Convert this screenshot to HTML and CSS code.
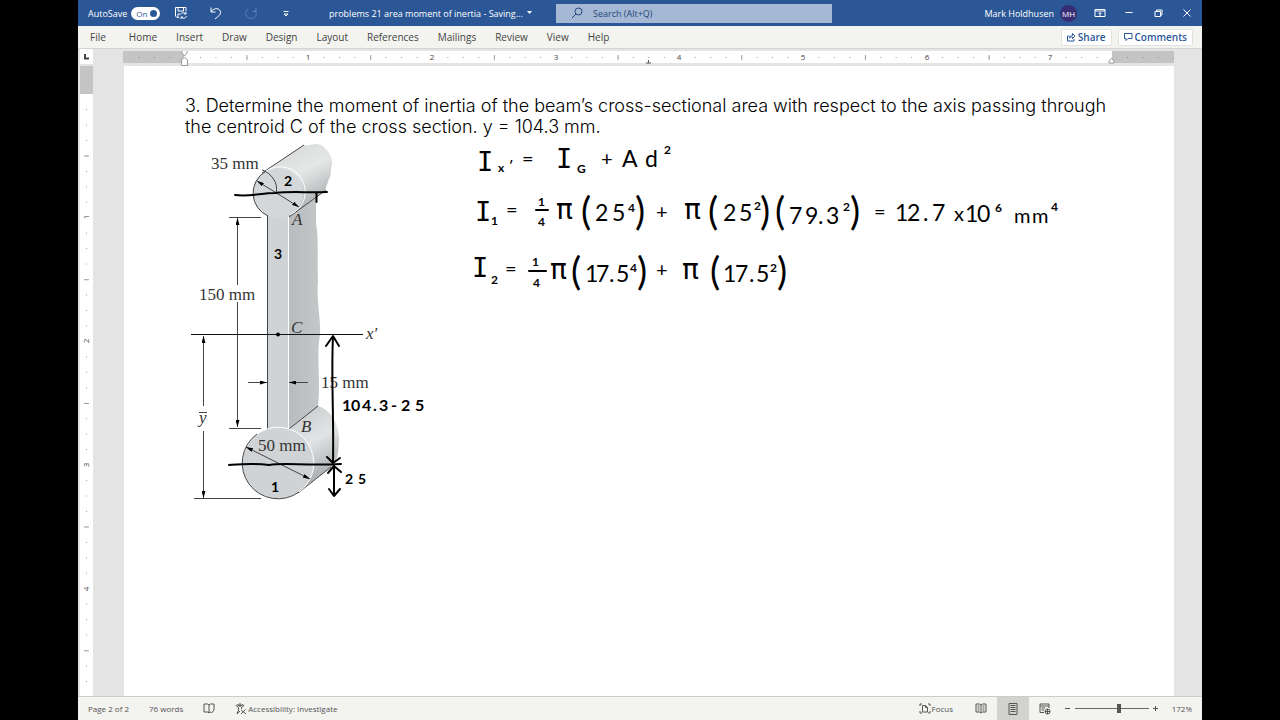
FILE: index.html
```html
<!DOCTYPE html>
<html lang="en">
<head>
<meta charset="utf-8">
<title>problems 21 area moment of inertia</title>
<link rel="stylesheet" href="styles.css">
</head>
<body>
<div class="app">
  <header class="titlebar">
    <div class="quick">
      <label class="autosave">AutoSave <span class="switch"><input type="checkbox" checked><span>On</span></span></label>
      <button class="tool" aria-label="Save"><svg width="14" height="14" viewBox="0 0 14 14"><path d="M5 11.500H3L1.500 10V1.500H12V5M4 1.500V5H9.500V1.500M4 11V8H6"/><path d="M6.500 8.500C7 6.500 10.500 6 12 8M12 5.800V8H9.800M12.500 10C12 12.500 8.500 13 7 11M7 13V11H9"/></svg></button>
      <button class="tool" aria-label="Undo"><svg width="14" height="14" viewBox="0 0 14 14"><path d="M2 1.500V6H6.500M2 6C5 1 11.500 2 11.500 6.500C11.500 9 9.500 10 6 13"/></svg></button>
      <button class="tool faded" aria-label="Redo"><svg width="14" height="14" viewBox="0 0 14 14"><path d="M12 1.500V5.500H8.500M4 3C-.5 6.500 2 12.500 7 12.500C12 12.500 14 7 10.500 3.500"/></svg></button>
      <button class="tool" aria-label="Customize toolbar"><svg width="14" height="14" viewBox="0 0 14 14"><path d="M4.500 5.500H9.500M5 8H9L7 10Z"/></svg></button>
    </div>
    <button class="doctitle">problems 21 area moment of inertia&nbsp;-&nbsp;Saving... <svg width="6" height="4"><path d="M0 0H5L2.500 3Z"/></svg></button>
    <label class="search"><svg width="14" height="14" viewBox="0 0 14 14"><circle cx="8.500" cy="5.500" r="3.500"/><path d="M6 8L2 12"/></svg><input type="text" placeholder="Search (Alt+Q)" aria-label="Search"></label>
    <div class="account">
      <span>Mark Holdhusen</span><span class="avatar">MH</span>
      <button class="win" aria-label="Ribbon display"><svg width="12" height="10"><path d="M1 1.500H11V8.500H1ZM1 3H11M6 8V4.500M4.500 6L6 4.500L7.500 6"/></svg></button>
      <button class="win" aria-label="Minimize"><svg width="12" height="10"><path d="M2.500 4.500H9.500"/></svg></button>
      <button class="win" aria-label="Restore"><svg width="12" height="10"><path d="M3 3.500H8.500V8.500H3ZM4.500 3.500V2H10V7H8.500"/></svg></button>
      <button class="win" aria-label="Close"><svg width="12" height="10"><path d="M2.500 1.500L9.500 8.500M9.500 1.500L2.500 8.500"/></svg></button>
    </div>
  </header>
  <nav class="tabs">
    <button class="file">File</button><button>Home</button><button>Insert</button><button>Draw</button><button>Design</button><button>Layout</button><button>References</button><button>Mailings</button><button>Review</button><button>View</button><button>Help</button>
    <div class="actions">
      <button><svg width="10" height="10"><path d="M3.500 4H1.500V9H8V7M3.500 6C4 4 5 3.500 6.500 3.500V1.500L9 4L6.500 6.500V5C5 5 4.500 5 3.500 6Z"/></svg>Share</button>
      <button><svg width="10" height="10"><path d="M1.500 1.500H9V6.500H5L3 8.500V6.500H1.500Z"/></svg>Comments</button>
    </div>
  </nav>
  <main class="workspace">
    <div class="side">
      <button class="tabstop" aria-label="Tab stop"><svg width="6" height="6"><path d="M1 0V4.500H5"/></svg></button>
      <svg class="vruler" width="13" height="630" viewBox="0 66 13 630">
        <rect y="66" width="13" height="28" class="shade"/>
        <path class="dots" d="M6.500 109V696"/>
        <path class="halves" d="M6.500 155.500V696"/>
        <g class="nums"><text transform="translate(9 217) rotate(-90)">1</text><text transform="translate(9 341) rotate(-90)">2</text><text transform="translate(9 465) rotate(-90)">3</text><text transform="translate(9 589) rotate(-90)">4</text></g>
      </svg>
    </div>
    <div class="sheet">
      <svg class="hruler" width="1052" height="15" viewBox="123 51 1052 15">
        <rect x="123" y="51" width="1051" height="12" fill="#fff"/>
        <rect x="123" y="51" width="61" height="12" class="shade"/><rect x="1112" y="51" width="62" height="12" class="shade"/>
        <path class="dots dark" d="M138.500 57.500H180M1127 57.500H1174"/>
        <path class="dots" d="M200 57.500H1110"/>
        <path class="halves" d="M246.500 57.500H1110"/>
        <g class="nums"><text x="308" y="60">1</text><text x="432" y="60">2</text><text x="556" y="60">3</text><text x="679" y="60">4</text><text x="803" y="60">5</text><text x="927" y="60">6</text><text x="1050" y="60">7</text></g>
        <path class="grip" d="M182 50.500H187V53L184.500 56L182 53ZM184.500 57L187.500 60V65.500H181.500V60ZM1111.500 58L1114 61V63H1109V61Z"/>
        <path class="stop" d="M646 63H651M648.500 60V63"/>
      </svg>
      <article class="page">
        <p>3. Determine the moment of inertia of the beam’s cross-sectional area with respect to the axis passing through the centroid C of the cross section. y = 104.3 mm.</p>
        <svg class="figure" viewBox="185 138 925 372">
          <defs>
            <linearGradient id="top" gradientUnits="userSpaceOnUse" x1="285" y1="160" x2="310" y2="206"><stop offset="0" stop-color="#dcdedf"/><stop offset=".35" stop-color="#e6e8e8"/><stop offset="1" stop-color="#aeb1b3"/></linearGradient>
            <linearGradient id="bottom" gradientUnits="userSpaceOnUse" x1="294" y1="420" x2="327" y2="480"><stop offset="0" stop-color="#cfd2d3"/><stop offset=".4" stop-color="#e1e3e4"/><stop offset="1" stop-color="#a3a6a8"/></linearGradient>
            <linearGradient id="web" x2="1"><stop offset="0" stop-color="#b9bcbe"/><stop offset="1" stop-color="#c4c7c8"/></linearGradient>
            <marker id="head" viewBox="0 0 7 4" markerWidth="7" markerHeight="4" refX="7" refY="2" orient="auto-start-reverse" markerUnits="userSpaceOnUse"><path d="M0 0L7 2L0 4Z"/></marker>
          </defs>
          <path fill="url(#web)" d="M289 217L316 197V223C319 241 317 260 318 281C316 300 321 318 320 335C316 355 321 380 318 407L289 429Z"/>
          <path fill="url(#top)" d="M262 174L304 145C309 147 313 142 321 145C329 150 333 159 332 164C330 169 332 174 329 179L325 190L289 217Z"/>
          <path fill="url(#bottom)" d="M288 429L318 406C331 410 339 424 339 439C339 454 336 464 331 467L298 492Z"/>
          <path class="edge" d="M262 173L304 145M289 217L326 190M289 429L318 406M298 493L331 467"/>
          <rect x="267" y="210" width="21" height="225" fill="#d0d3d5"/>
          <path class="edge" d="M267.500 215V431"/><path class="shine" d="M288.500 217V430"/>
          <circle cx="278" cy="193" r="25" fill="#d4d7d9"/><path class="shine" d="M265.500 171.500A25 25 0 1 1 290.500 214.500"/><path class="edge" d="M265.500 171.500A25 25 0 0 0 268 216"/>
          <circle cx="278" cy="463" r="35.500" fill="#d0d3d5"/><path class="shine" d="M257 434A35.500 35.500 0 1 1 299 492"/><path class="edge" d="M257 434A35.500 35.500 0 0 0 299 492"/>
          <g class="dimension">
            <path d="M262 170C271 173 279 183 276 193M229 217.500H261M229 428.500H261M194 498.500H261"/>
            <path marker-start="url(#head)" marker-end="url(#head)" d="M257 181L299 207"/>
            <path marker-start="url(#head)" marker-end="url(#head)" d="M246 447L310 479"/>
            <path marker-start="url(#head)" d="M237.500 218V285"/><path marker-end="url(#head)" d="M237.500 302V427"/>
            <path marker-start="url(#head)" d="M203.500 336V406"/><path marker-end="url(#head)" d="M203.500 431V498"/>
            <path marker-end="url(#head)" d="M248 382.500H267"/><path marker-end="url(#head)" d="M308 382.500H289"/>
            <path class="axis" d="M191 334.500H363"/><path d="M199 412.500H207"/>
          </g>
          <circle cx="278" cy="334.500" r="2"/>
          <g class="labels">
            <text x="211" y="169">35 mm</text><text x="199" y="300">150 mm</text><text x="321" y="388">15 mm</text><text x="258" y="451">50 mm</text>
            <g class="var"><text x="292" y="225">A</text><text x="291" y="333">C</text><text x="301" y="432">B</text><text x="366" y="339">x′</text><text x="199" y="423">y</text></g>
          </g>
          <g class="stroke">
            <path d="M235 195C250 197 261 193 275 193C294 191 306 193 327 192M316.500 193V202M229 465C243 464 254 463 269 465C286 462 303 466 341 464"/>
            <path d="M333 337C331 375 334 420 333 461M326 346L333 336L339 346M327 457L333 463L340 458M334 466V495M328 473L334 466L341 472M329 489L334 496L340 489"/>
            <path d="M536 210H548M529 271H546"/>
          </g>
          <g class="ink">
            <g class="serif"><text x="477" y="171">I</text><text x="556" y="168">I</text><text x="475" y="221">I</text><text x="472" y="277">I</text></g>
            <g class="note"><text x="284" y="186">2</text><text x="274" y="259">3</text><text x="271" y="492">1</text><text x="345" y="484">2</text><text x="358" y="484">5</text></g>
            <g class="offset"><text x="342" y="411">1</text><text x="351" y="411">0</text><text x="362" y="411">4</text><text x="373" y="411">.</text><text x="379" y="411">3</text><text x="391" y="411">-</text><text x="401" y="411">2</text><text x="415" y="411">5</text></g>
            <g class="medium">
              <text x="522" y="166">=</text><text x="601" y="166">+</text>
              <text x="506" y="217">=</text><text x="656" y="219">+</text><text x="874" y="219">=</text>
              <text x="505" y="276">=</text><text x="656" y="277">+</text>
              <text x="954" y="221">x</text><text x="1014" y="223">m</text><text x="1032" y="223">m</text>
            </g>
            <g class="small">
              <text x="498" y="172">x</text><text x="509" y="170">′</text><text x="577" y="173">G</text><text x="664" y="154">2</text>
              <text x="491" y="225">1</text><text x="538" y="206">1</text><text x="538" y="226">4</text><text x="628" y="212">4</text><text x="754" y="210">2</text><text x="843" y="211">2</text><text x="995" y="212">6</text><text x="1051" y="211">4</text>
              <text x="491" y="284">2</text><text x="532" y="266">1</text><text x="533" y="287">4</text><text x="630" y="272">4</text><text x="770" y="272">2</text>
            </g>
            <g class="large">
              <text x="622" y="167">A</text><text x="645" y="167">d</text>
              <text x="595" y="221">2</text><text x="612" y="221">5</text><text x="723" y="221">2</text><text x="739" y="221">5</text>
              <text x="789" y="224">7</text><text x="805" y="224">9</text><text x="818" y="224">.</text><text x="826" y="224">3</text>
              <text x="895" y="221">1</text><text x="907" y="221">2</text><text x="923" y="221">.</text><text x="932" y="221">7</text><text x="965" y="222">1</text><text x="977" y="222">0</text>
              <text x="585" y="282">1</text><text x="596" y="282">7</text><text x="609" y="282">.</text><text x="616" y="282">5</text>
              <text x="723" y="282">1</text><text x="735" y="282">7</text><text x="749" y="282">.</text><text x="756" y="282">5</text>
            </g>
            <g class="pi"><text x="556" y="219">π</text><text x="684" y="219">π</text><text x="550" y="279">π</text><text x="682" y="279">π</text></g>
            <g class="paren">
              <text x="581" y="225">(</text><text x="635" y="225">)</text><text x="708" y="225">(</text><text x="760" y="225">)</text><text x="775" y="225">(</text><text x="850" y="225">)</text>
              <text x="571" y="285">(</text><text x="637" y="285">)</text><text x="710" y="285">(</text><text x="777" y="285">)</text>
            </g>
          </g>
        </svg>
      </article>
    </div>
  </main>
  <footer class="status">
    <span>Page 2 of 2</span><span>76 words</span>
    <button aria-label="Proofing"><svg width="12" height="11"><path d="M6 2L4.500 1H1V9H4.500L6 10L7 9M6 2V10M6 2L7.500 1H11V7M7 8.500L8.500 10L11 7"/></svg></button>
    <button class="access"><svg width="12" height="12"><circle cx="5" cy="2" r="1.200"/><path d="M1 2.500L3.500 4.500V7L2 11L5 8M9 2.500L6.500 4.500V6M1 2.500L2 1.500L4 3H6L8 1.500L9 2.500M6 7L11 11M10.500 6.500L6 11"/></svg>Accessibility: Investigate</button>
    <div class="views">
      <button class="focus"><svg width="12" height="11"><path d="M3 1H1V3M9 1H11V3M1 8V10H3M11 8V10H9M3.500 2.500H6.500L8.500 4.500V9H3.500ZM6.500 2.500V4.500H8.500"/></svg>Focus</button>
      <button class="view" aria-label="Read mode"><svg width="12" height="11"><path d="M6 2L4.500 1H1V9H4.500L6 10L7.500 9H11V1H7.500ZM6 2V10M2.500 3H4.500M2.500 5H4.500M2.500 7H4.500M7.500 3H9.500M7.500 5H9.500M7.500 7H9.500"/></svg></button>
      <button class="view active" aria-label="Print layout"><svg width="12" height="12"><path d="M2 .5H10V11.500H2ZM3.500 2.500H8.500M3.500 4.500H8.500M3.500 6.500H8.500M3.500 8.500H8.500"/></svg></button>
      <button class="view" aria-label="Web layout"><svg width="12" height="12"><path d="M5 9.500H1V1H10V5M1 3H10M2.500 5H6M2.500 7H5"/><circle cx="8.500" cy="8.500" r="2.500"/><path d="M6 8.500H11M8.500 6V11"/></svg></button>
      <button class="zoom" aria-label="Zoom out"><svg width="7" height="7"><path d="M1 3.500H6"/></svg></button>
      <input type="range" min="10" max="330" value="200" aria-label="Zoom">
      <button class="zoom" aria-label="Zoom in"><svg width="7" height="7"><path d="M1 3.500H6M3.500 1V6"/></svg></button>
      <span class="percent">172%</span>
    </div>
  </footer>
</div>
</body>
</html>
```

FILE: styles.css
```css
* { box-sizing: border-box; }
body { margin: 0; background: #000; font-family: "Open Sans", "Noto Sans", sans-serif; font-size: 10px; color: #444; }
button { font: inherit; color: inherit; background: none; border: 0; padding: 0; display: flex; align-items: center; white-space: nowrap; }
svg { display: block; flex: none; }
.app { height: 100vh; margin: 0 78px; display: flex; flex-direction: column; background: #e4e4e4; overflow: hidden; }
button svg, .search svg { fill: none; stroke: currentColor; stroke-width: 1; }

.titlebar { flex: none; height: 26px; background: #2b5797; color: #fff; font-size: 9px; display: grid; grid-template-columns: 251px 227px 276px 1fr; align-items: center; }
.quick { display: flex; align-items: center; padding-left: 10px; }
.autosave { display: flex; align-items: center; gap: 4px; width: 86px; white-space: nowrap; }
.switch { position: relative; width: 29px; height: 13px; border-radius: 7px; background: #fff; color: #2b5797; display: flex; align-items: center; padding-left: 5px; font-size: 8px; }
.switch input { appearance: none; position: absolute; right: 3px; top: 3px; width: 7px; height: 7px; margin: 0; border-radius: 50%; background: #2b5797; }
.tool { width: 35px; }
.faded { color: #5c80b5; }
.doctitle { gap: 4px; }
.doctitle svg { fill: #fff; stroke: none; }
.search { height: 19px; background: #a5b9d4; color: #26477c; display: flex; align-items: center; gap: 9px; padding-left: 14px; }
.search input { flex: 1; min-width: 0; border: 0; padding: 0; background: none; font: inherit; }
.search input::placeholder { color: #26477c; opacity: 1; }
.account { display: flex; align-items: center; justify-content: flex-end; padding-right: 9px; white-space: nowrap; }
.avatar { width: 17px; height: 17px; margin: 0 17px 0 6px; border-radius: 50%; background: #372d75; font-size: 8px; display: flex; align-items: center; justify-content: center; }
.win { width: 29px; }
.win:last-child { width: 12px; }

.tabs { flex: none; height: 23px; background: #f3f3f0; border-bottom: 1px solid #d4d4d2; display: flex; align-items: center; gap: 19px; padding: 0 9px 0 12px; }
.tabs .file { margin-right: 4px; }
.actions { margin-left: auto; display: flex; gap: 6px; }
.actions button { height: 17px; gap: 2px; padding: 0 5px 0 4px; background: #fff; border: 1px solid #e2e2e0; border-radius: 2px; color: #2b5797; font-weight: 600; }

.workspace { flex: 1; min-height: 0; display: flex; overflow: hidden; }
.side { flex: none; width: 45px; padding-left: 2px; }
.tabstop { width: 13px; height: 15px; background: #fff; justify-content: center; margin-bottom: 2px; }
.tabstop svg { stroke-width: 2; }
.vruler { background: #fff; }
.sheet { flex: 1; min-width: 0; margin-right: 28px; padding-top: 2px; }
.shade { fill: #c4c4c4; }
.dots, .halves { fill: none; stroke: #a0a0a0; }
.dots { stroke-width: 1; stroke-dasharray: 1 14.46; }
.dark { stroke: #888; }
.halves { stroke-width: 5; stroke-dasharray: 1 122.7; }
.nums { font-size: 8px; fill: #444; text-anchor: middle; paint-order: stroke; stroke: #fff; stroke-width: 2; }
.grip { fill: #fff; stroke: #999; }
.stop { fill: none; stroke: #555; }

.page { height: 100%; margin-left: 1px; background: #fff; padding: 29px 50px 0 61px; }
.page p { margin: 0; max-width: 940px; font-family: Inter, Lato, sans-serif; font-weight: 300; font-size: 18px; line-height: 21px; color: #000; }
.figure { width: 925px; max-width: 100%; height: auto; margin-top: 1px; }
.edge { fill: none; stroke: #444; stroke-width: 1; }
.shine { fill: none; stroke: #fff; stroke-width: 1; }
.dimension { fill: none; stroke: #444; stroke-width: 1; }
.dimension .axis { stroke: #111; }
.labels { font-family: "Liberation Serif", serif; font-size: 17px; fill: #333; }
.var { font-style: italic; }
.stroke { fill: none; stroke: #000; stroke-width: 2; stroke-linecap: round; stroke-linejoin: round; }
.ink { font-family: Lato, "Noto Sans", sans-serif; fill: #000; }
.serif { font-family: "DejaVu Sans Mono", monospace; font-size: 27px; }
.note { font-size: 14px; font-weight: 700; }
.offset { font-size: 16px; font-weight: 700; }
.small { font-size: 12px; font-weight: 700; }
.medium { font-size: 20px; }
.large { font-size: 23px; }
.pi { font-family: "DejaVu Sans", sans-serif; font-size: 28px; }
.paren { font-size: 38px; }

.status { flex: none; height: 24px; border-top: 1px solid #cccec6; background: #f3f3f0; color: #555; font-size: 8px; display: flex; align-items: center; gap: 20px; padding-left: 10px; }
.access, .focus { gap: 1px; }
.views { margin-left: auto; display: flex; align-items: center; height: 100%; }
.focus { margin-right: 12px; }
.view { width: 32px; height: 100%; justify-content: center; }
.view.active { background: #d2d2cf; }
.zoom { margin: 0 3px; }
.views input { appearance: none; width: 74px; height: 12px; margin: 0 0 0 1px; background: linear-gradient(#666, #666) center / 100% 1px no-repeat; }
.views input::-webkit-slider-thumb { appearance: none; width: 4px; height: 9px; background: #555; }
.percent { width: 30px; margin-right: 10px; text-align: right; }
```
